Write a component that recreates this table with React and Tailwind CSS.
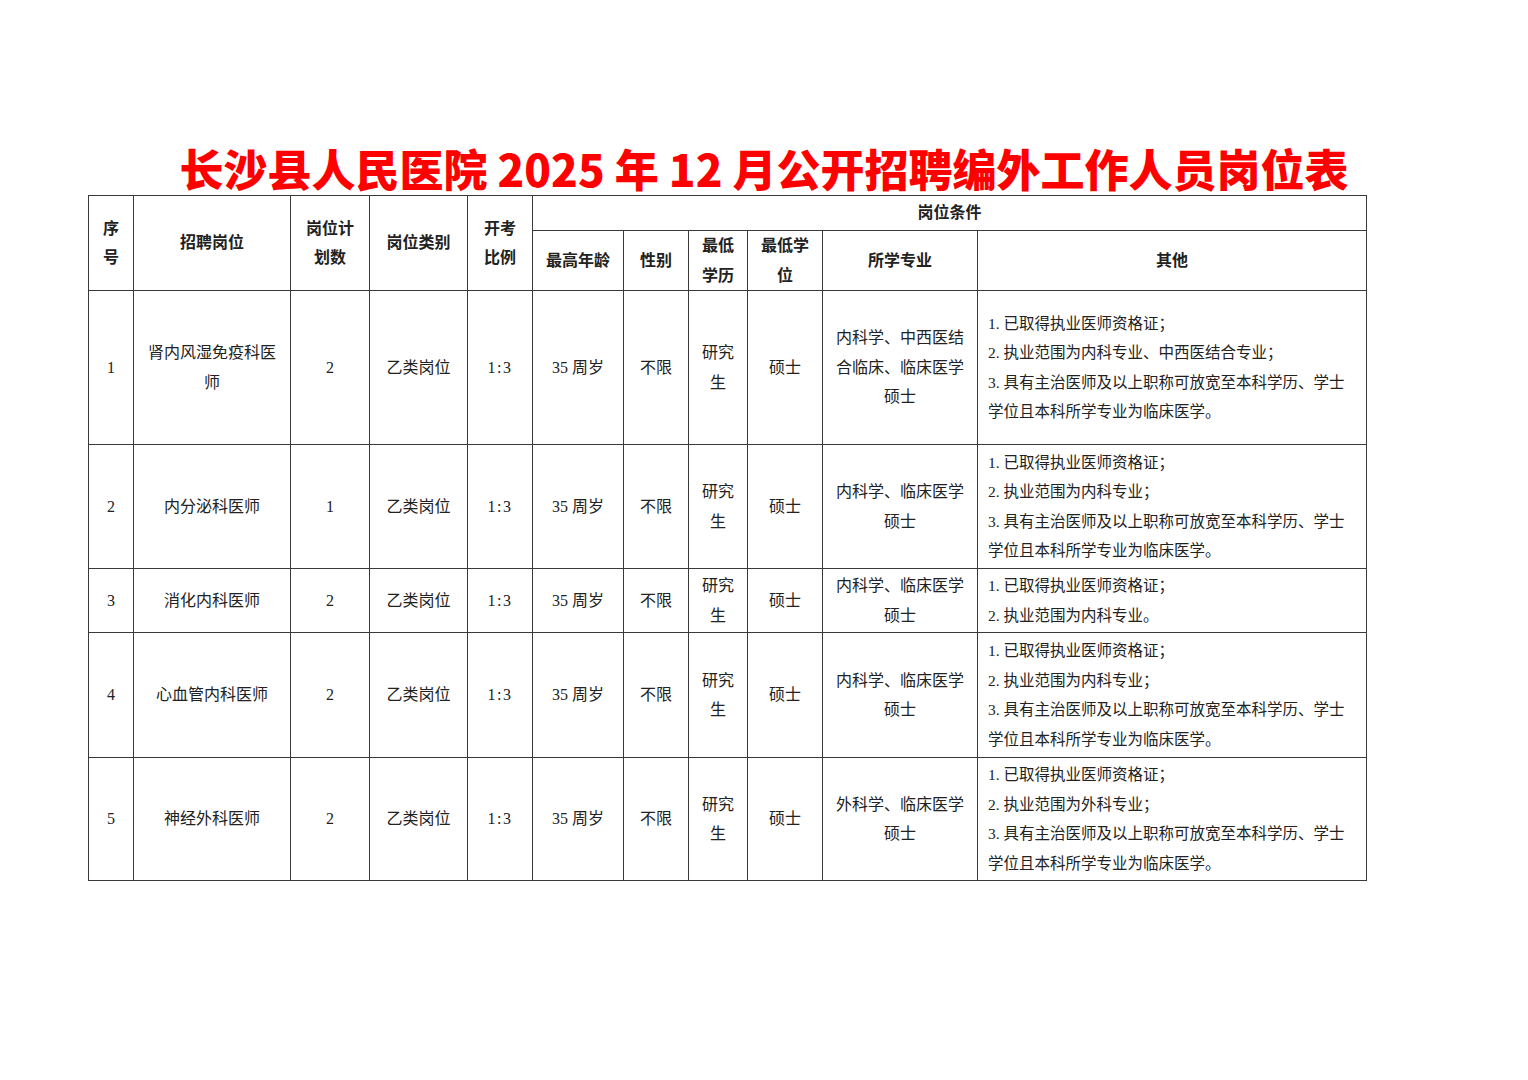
import React from 'react';

const cols = [45, 157, 79, 98, 65, 91, 65, 59, 75, 155, 389];

const rows = [
  {
    no: '1',
    post: ['肾内风湿免疫科医', '师'],
    plan: '2',
    major: ['内科学、中西医结', '合临床、临床医学', '硕士'],
    other: [
      '1. 已取得执业医师资格证；',
      '2. 执业范围为内科专业、中西医结合专业；',
      '3. 具有主治医师及以上职称可放宽至本科学历、学士',
      '学位且本科所学专业为临床医学。'
    ],
    h: 154
  },
  {
    no: '2',
    post: ['内分泌科医师'],
    plan: '1',
    major: ['内科学、临床医学', '硕士'],
    other: [
      '1. 已取得执业医师资格证；',
      '2. 执业范围为内科专业；',
      '3. 具有主治医师及以上职称可放宽至本科学历、学士',
      '学位且本科所学专业为临床医学。'
    ],
    h: 124
  },
  {
    no: '3',
    post: ['消化内科医师'],
    plan: '2',
    major: ['内科学、临床医学', '硕士'],
    other: ['1. 已取得执业医师资格证；', '2. 执业范围为内科专业。'],
    h: 64
  },
  {
    no: '4',
    post: ['心血管内科医师'],
    plan: '2',
    major: ['内科学、临床医学', '硕士'],
    other: [
      '1. 已取得执业医师资格证；',
      '2. 执业范围为内科专业；',
      '3. 具有主治医师及以上职称可放宽至本科学历、学士',
      '学位且本科所学专业为临床医学。'
    ],
    h: 125
  },
  {
    no: '5',
    post: ['神经外科医师'],
    plan: '2',
    major: ['外科学、临床医学', '硕士'],
    other: [
      '1. 已取得执业医师资格证；',
      '2. 执业范围为外科专业；',
      '3. 具有主治医师及以上职称可放宽至本科学历、学士',
      '学位且本科所学专业为临床医学。'
    ],
    h: 123
  }
];

const cell = 'border border-[#3a3a3a] text-center align-middle p-0';

const Lines = ({ items }) => (
  <div className="flex flex-col items-center leading-[29.5px]">
    {items.map((t, i) => (
      <span key={i} className="whitespace-nowrap">{t}</span>
    ))}
  </div>
);

export default function App() {
  return (
    <div
      className="w-[1528px] h-[1080px] bg-white text-[#222]"
      style={{ fontFamily: '"Liberation Serif", "Noto Sans CJK SC", serif' }}
    >
      <div className="pt-[144px] pl-[88px]">
        <h1
          className="w-[1352px] text-center text-[44px] leading-[48px] font-black text-[#ff0000]"
          style={{ fontFamily: '"Noto Sans CJK SC", sans-serif' }}
        >
          长沙县人民医院 2025 年 12 月公开招聘编外工作人员岗位表
        </h1>
        <table className="mt-[3px] border-collapse table-fixed w-[1278px] text-[16px]">
          <colgroup>
            {cols.map((w, i) => (
              <col key={i} style={{ width: w }} />
            ))}
          </colgroup>
          <thead className="font-bold">
            <tr className="h-[35px]">
              <th rowSpan={2} className={cell}>
                <Lines items={['序', '号']} />
              </th>
              <th rowSpan={2} className={cell}>招聘岗位</th>
              <th rowSpan={2} className={cell}>
                <Lines items={['岗位计', '划数']} />
              </th>
              <th rowSpan={2} className={cell}>岗位类别</th>
              <th rowSpan={2} className={cell}>
                <Lines items={['开考', '比例']} />
              </th>
              <th colSpan={6} className={cell}>岗位条件</th>
            </tr>
            <tr className="h-[60px]">
              <th className={cell}>最高年龄</th>
              <th className={cell}>性别</th>
              <th className={cell}>
                <Lines items={['最低', '学历']} />
              </th>
              <th className={cell}>
                <Lines items={['最低学', '位']} />
              </th>
              <th className={cell}>所学专业</th>
              <th className={cell}>其他</th>
            </tr>
          </thead>
          <tbody className="font-normal">
            {rows.map((r) => (
              <tr key={r.no} style={{ height: r.h }}>
                <td className={cell}>{r.no}</td>
                <td className={cell}>
                  <Lines items={r.post} />
                </td>
                <td className={cell}>{r.plan}</td>
                <td className={cell}>乙类岗位</td>
                <td className={`${cell} tracking-[1.5px]`}>1:3</td>
                <td className={cell}>35 周岁</td>
                <td className={cell}>不限</td>
                <td className={cell}>
                  <Lines items={['研究', '生']} />
                </td>
                <td className={cell}>硕士</td>
                <td className={cell}>
                  <Lines items={r.major} />
                </td>
                <td className={`${cell} text-left`}>
                  <div className="flex flex-col pl-[10px] text-[15.5px] leading-[29.5px]">
                    {r.other.map((t, i) => (
                      <span key={i} className="whitespace-nowrap">{t}</span>
                    ))}
                  </div>
                </td>
              </tr>
            ))}
          </tbody>
        </table>
      </div>
    </div>
  );
}
